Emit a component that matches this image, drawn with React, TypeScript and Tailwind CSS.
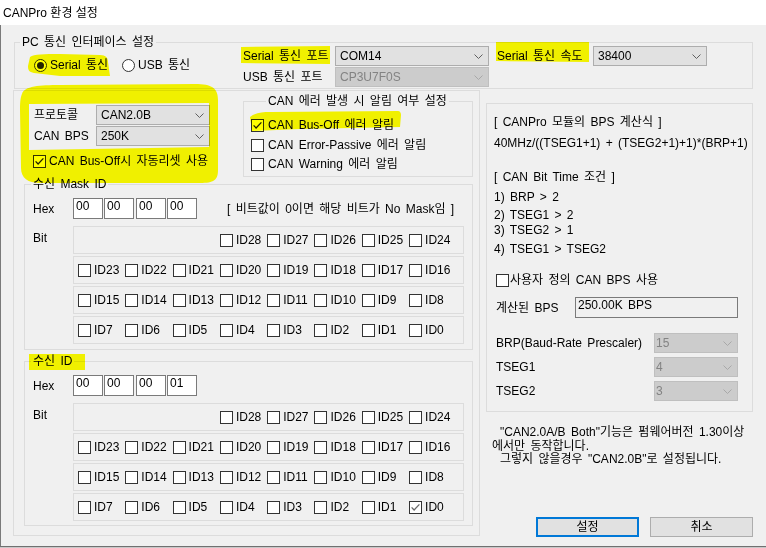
import React from "react";

type CheckProps = { checked?: boolean; mark?: string };

function Check({ checked, mark = "#222222" }: CheckProps) {
  return (
    <span className="flex h-[13px] w-[13px] shrink-0 items-center justify-center border border-[#333333] bg-white">
      {checked && (
        <svg width="11" height="11" viewBox="0 0 11 11">
          <path d="M1.6 5.4L4.1 8L9.4 2.4" fill="none" stroke={mark} strokeWidth="1.3" />
        </svg>
      )}
    </span>
  );
}

function Radio({ on }: { on?: boolean }) {
  return (
    <span className="flex h-[13px] w-[13px] shrink-0 items-center justify-center rounded-full border border-[#333333] bg-white">
      {on && <span className="h-[7px] w-[7px] rounded-full bg-[#222222]" />}
    </span>
  );
}

type ComboProps = { value: string; className: string; disabled?: boolean };

function Combo({ value, className, disabled }: ComboProps) {
  return (
    <div
      className={`flex h-[20px] shrink-0 items-center justify-between border pr-[5px] ${
        disabled
          ? "border-[#bfbfbf] bg-[#cccccc] text-[#838383]"
          : "border-[#adadad] bg-[#e1e1e1]"
      } ${className}`}
    >
      <span className="leading-[14px]">{value}</span>
      <svg width="9" height="5" viewBox="0 0 9 5">
        <path
          d="M0.5 0.5L4.5 4.5L8.5 0.5"
          fill="none"
          stroke={disabled ? "#a8a8a8" : "#606060"}
        />
      </svg>
    </div>
  );
}

function HexBox({ v }: { v: string }) {
  return (
    <div className="h-[21px] w-[30px] shrink-0 border border-[#7a7a7a] bg-white pl-[2px] leading-[15px]">
      {v}
    </div>
  );
}

const ROWS: number[][] = [
  [28, 27, 26, 25, 24],
  [23, 22, 21, 20, 19, 18, 17, 16],
  [15, 14, 13, 12, 11, 10, 9, 8],
  [7, 6, 5, 4, 3, 2, 1, 0],
];

function IdBlock({ hex, note, checkedId }: { hex: string[]; note?: boolean; checkedId?: number }) {
  return (
    <div className="pl-[8px] pt-[6px]">
      {/* Hex */}
      <div className="flex h-[21px] items-center">
        <span className="w-[40px] leading-[14px]">Hex</span>
        <HexBox v={hex[0]} />
        <div className="ml-[1px]">
          <HexBox v={hex[1]} />
        </div>
        <div className="ml-[2px]">
          <HexBox v={hex[2]} />
        </div>
        <div className="ml-[1px]">
          <HexBox v={hex[3]} />
        </div>
        {note && (
          <span className="ml-[30px] whitespace-nowrap leading-[14px]">
            [ 비트값이 0이면 해당 비트가 No Mask임 ]
          </span>
        )}
      </div>

      {/* Bit */}
      <div className="mt-[7px] flex">
        <span className="w-[40px] pt-[5px] leading-[14px]">Bit</span>
        <div className="flex flex-col gap-[2px]">
          {ROWS.map((row, ri) => (
            <div
              key={ri}
              className="grid h-[28px] w-[391px] grid-cols-[repeat(8,47.3px)] items-center border border-[#dcdcdc] pl-[4px]"
            >
              {row.map((id, i) => (
                <div
                  key={id}
                  className={`flex items-center gap-[3px] leading-[14px] ${
                    ri === 0 && i === 0 ? "col-start-4" : ""
                  }`}
                >
                  <Check checked={checkedId === id} mark="#6a6a6a" />
                  <span>ID{id}</span>
                </div>
              ))}
            </div>
          ))}
        </div>
      </div>
    </div>
  );
}

export default function App() {
  return (
    <div className="relative h-[548px] w-[766px] overflow-hidden bg-white font-['Liberation_Sans','Noto_Sans_CJK_KR',sans-serif] text-[12px] text-black">
      {/* Title bar */}
      <div className="flex h-[25px] items-center pl-[3px] leading-[14px]">CANPro 환경 설정</div>

      <div className="flex h-[521px] flex-col items-start border-l border-[#7a7a7a] bg-[#f0f0f0] [word-spacing:2px]">
        {/* PC 통신 인터페이스 설정 */}
        <fieldset className="ml-[13px] mt-[10px] h-[54px] w-[739px] border border-[#dcdcdc]">
          <legend className="ml-[5px] px-[2px] leading-[15px]">PC 통신 인터페이스 설정</legend>
          <div className="-mt-[4px] flex items-start">
            <div className="flex w-[228px] items-center pl-[19px] pt-[12px] leading-[14px]">
              <span className="flex w-[88px] items-center gap-[3px]">
                <Radio on />
                <span>Serial 통신</span>
              </span>
              <span className="flex items-center gap-[3px]">
                <Radio />
                <span>USB 통신</span>
              </span>
            </div>
            <div className="flex flex-col gap-[1px]">
              <div className="flex items-center">
                <span className="w-[92px] leading-[14px]">Serial 통신 포트</span>
                <Combo value="COM14" className="w-[154px] pl-[4px]" />
              </div>
              <div className="flex items-center">
                <span className="w-[92px] leading-[14px]">USB 통신 포트</span>
                <Combo value="CP3U7F0S" disabled className="w-[154px] pl-[4px]" />
              </div>
            </div>
            <div className="ml-[8px] flex items-center">
              <span className="w-[96px] leading-[14px]">Serial 통신 속도</span>
              <Combo value="38400" className="w-[114px] pl-[4px]" />
            </div>
          </div>
        </fieldset>

        <div className="mt-[1px] flex items-start">
          {/* Left frame */}
          <div className="ml-[12px] h-[446px] w-[467px] border border-[#dcdcdc]">
            <div className="flex h-[86px]">
              <div className="w-[229px] pl-[20px] pt-[14px]">
                <div className="flex items-center">
                  <span className="w-[62px] leading-[14px]">프로토콜</span>
                  <Combo value="CAN2.0B" className="w-[114px] pl-[4px]" />
                </div>
                <div className="mt-[1px] flex items-center">
                  <span className="w-[62px] leading-[14px]">CAN BPS</span>
                  <Combo value="250K" className="w-[114px] pl-[4px]" />
                </div>
                <div className="-ml-[1px] mt-[8px] flex items-center gap-[3px] leading-[14px]">
                  <Check checked />
                  <span className="whitespace-nowrap">CAN Bus-Off시 자동리셋 사용</span>
                </div>
              </div>

              <fieldset className="mt-[3px] h-[83px] w-[230px] border border-[#dcdcdc]">
                <legend className="ml-[22px] px-[2px] leading-[15px]">CAN 에러 발생 시 알림 여부 설정</legend>
                <div className="flex flex-col pl-[7px] pt-[9px] leading-[14px]">
                  <div className="flex items-center gap-[4px]">
                    <Check checked />
                    <span>CAN Bus-Off 에러 알림</span>
                  </div>
                  <div className="mt-[6px] flex items-center gap-[4px]">
                    <Check />
                    <span>CAN Error-Passive 에러 알림</span>
                  </div>
                  <div className="mt-[5px] flex items-center gap-[4px]">
                    <Check />
                    <span>CAN Warning 에러 알림</span>
                  </div>
                </div>
              </fieldset>
            </div>

            <fieldset className="ml-[10px] h-[173px] w-[449px] border border-[#dcdcdc]">
              <legend className="ml-[6px] px-[2px] leading-[15px]">수신 Mask ID</legend>
              <IdBlock hex={["00", "00", "00", "00"]} note />
            </fieldset>

            <fieldset className="ml-[10px] mt-[4px] h-[172px] w-[449px] border border-[#dcdcdc]">
              <legend className="ml-[6px] px-[2px] leading-[15px]">수신 ID</legend>
              <IdBlock hex={["00", "00", "00", "01"]} checkedId={0} />
            </fieldset>
          </div>

          {/* Right column */}
          <div className="ml-[6px] mt-[13px] flex flex-col">
            <div className="h-[309px] w-[267px] border border-[#dcdcdc] pl-[7px] leading-[14px]">
              <div className="mt-[11px]">[ CANPro 모듈의 BPS 계산식 ]</div>
              <div className="mt-[7px] whitespace-nowrap">40MHz/((TSEG1+1) + (TSEG2+1)+1)*(BRP+1)</div>
              <div className="mt-[20px]">[ CAN Bit Time 조건 ]</div>
              <div className="mt-[6px]">1) BRP &gt; 2</div>
              <div className="mt-[4px]">2) TSEG1 &gt; 2</div>
              <div className="mt-[1px]">3) TSEG2 &gt; 1</div>
              <div className="mt-[5px]">4) TSEG1 &gt; TSEG2</div>
              <div className="ml-[2px] mt-[17px] flex items-center gap-[1px]">
                <Check />
                <span>사용자 정의 CAN BPS 사용</span>
              </div>
              <div className="ml-[2px] mt-[10px] flex items-center">
                <span className="w-[79px]">계산된 BPS</span>
                <div className="h-[21px] w-[163px] border border-[#7a7a7a] pl-[2px] leading-[15px]">
                  250.00K BPS
                </div>
              </div>
              <div className="ml-[2px] mt-[15px] flex items-center">
                <span className="w-[158px] whitespace-nowrap">BRP(Baud-Rate Prescaler)</span>
                <Combo value="15" disabled className="w-[84px] pl-[1px]" />
              </div>
              <div className="ml-[2px] mt-[4px] flex items-center">
                <span className="w-[158px]">TSEG1</span>
                <Combo value="4" disabled className="w-[84px] pl-[1px]" />
              </div>
              <div className="ml-[2px] mt-[4px] flex items-center">
                <span className="w-[158px]">TSEG2</span>
                <Combo value="3" disabled className="w-[84px] pl-[1px]" />
              </div>
            </div>

            <div className="mt-[14px] h-[41px] whitespace-nowrap leading-[13.5px]">
              <div className="pl-[14px]">"CAN2.0A/B Both"기능은 펌웨어버전 1.30이상</div>
              <div className="pl-[6px]">에서만 동작합니다.</div>
              <div className="pl-[14px]">그렇지 않을경우 "CAN2.0B"로 설정됩니다.</div>
            </div>

            <div className="ml-[50px] mt-[50px] flex gap-[11px]">
              <button className="flex h-[20px] w-[103px] items-center justify-center border-2 border-[#0078d7] bg-[#e1e1e1] leading-[14px]">
                설정
              </button>
              <button className="flex h-[20px] w-[103px] items-center justify-center border border-[#adadad] bg-[#e1e1e1] leading-[14px]">
                취소
              </button>
            </div>
          </div>
        </div>
      </div>

      <div className="h-[1px] bg-[#707070]" />
      <div className="h-[1px] bg-[#c8c8c8]" />

      {/* highlighter marks */}
      <svg
        className="pointer-events-none absolute left-0 top-0 mix-blend-multiply"
        width="766"
        height="548"
        viewBox="0 0 766 548"
      >
        <g fill="#ffff00">
          <path d="M30 57C34 54 44 54 60 54L100 55C106 55 108 58 108 62L110 76L60 76L34 73C29 72 28 70 28 66Z" />
          <path d="M241 47L330 46L330 64L241 63Z" />
          <path d="M496 42L589 42L589 62L496 61Z" />
          <path
            fillRule="evenodd"
            d="M22 94C24 86 40 85 60 85L195 84C212 84 218 88 218 100L218 170C218 180 214 183 200 183L40 183C28 183 21 178 21 168L20 110C20 100 21 96 22 94ZM29 104L209 103L209 147L150 148L29 150Z"
          />
          <path d="M250 117C255 113 262 112 270 112L398 111C400 111 401 113 401 115L400 127L300 129L252 131Z" />
          <path d="M29 354L85 354L85 370L29 370Z" />
        </g>
      </svg>
    </div>
  );
}
